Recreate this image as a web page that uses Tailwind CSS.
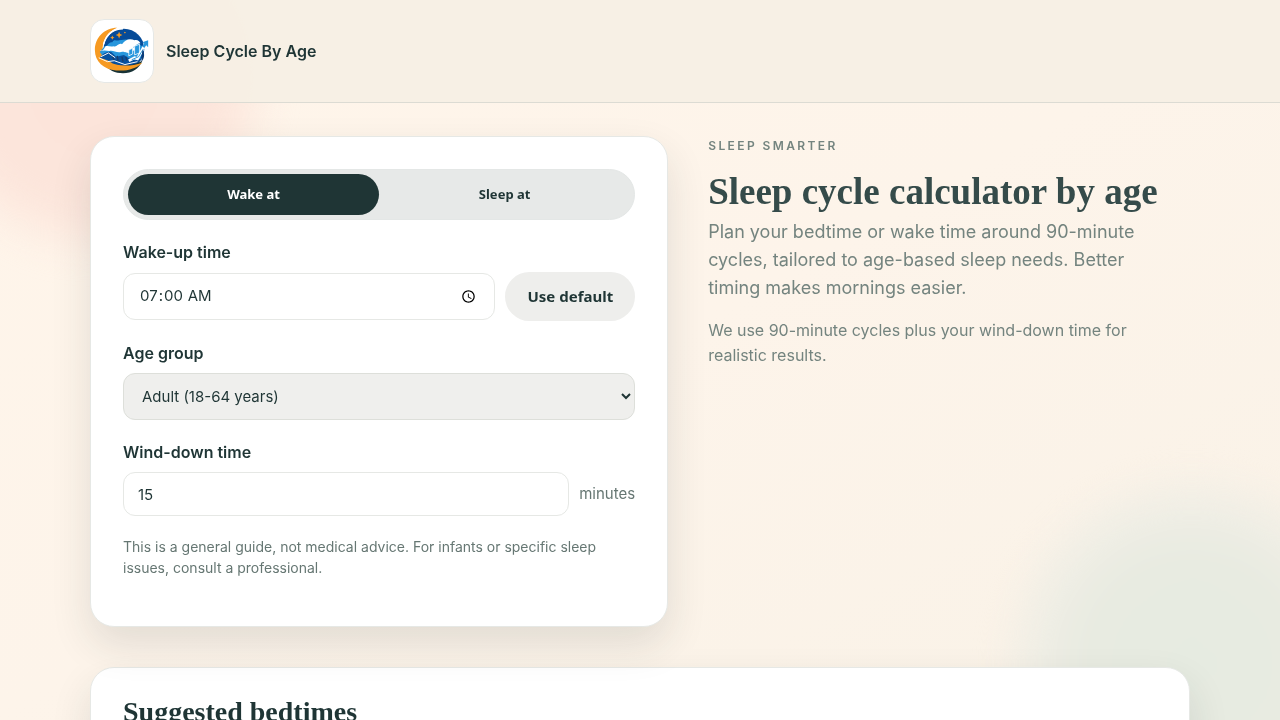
<!DOCTYPE html>
<html lang="en">
<head>
  <meta charset="UTF-8" />
  <meta content="width=device-width, initial-scale=1.0" name="viewport" />
  <title>Sleep Cycle By Age</title>
  <script src="https://cdn.jsdelivr.net/npm/@tailwindcss/browser@4"></script>
</head>
<body class="relative min-h-screen overflow-x-hidden bg-[#fdf4ea] font-['Inter','Noto_Sans',sans-serif] text-base text-[#1f3535]">
  <!-- soft background glows -->
  <div aria-hidden="true" class="fixed inset-0 -z-10 overflow-hidden bg-linear-to-br from-[#fff5ea] via-[#fdf4ea] to-[#f9f2e7]">
    <div class="absolute -left-24 -top-28 size-[380px] rounded-full bg-[radial-gradient(circle,#fce4da_0%,#fce5db_48%,transparent_70%)] blur-md"></div>
    <div class="absolute -bottom-36 -right-28 size-[400px] rounded-full bg-[radial-gradient(circle,#e6ebe1_0%,#e8ebe1_38%,#f0eee5_56%,transparent_70%)] blur-md"></div>
  </div>

  <header class="border-b border-[#dcdbd3] bg-[#f6efe4]/90">
    <div class="mx-auto flex max-w-[1100px] items-center py-[19px]">
      <a class="flex items-center gap-3 font-semibold" href="/">
        <svg class="size-16 rounded-[14px] border border-[#e6e8e6] bg-white" viewBox="0 0 64 64" aria-hidden="true">
          <!-- night sky and crescent -->
          <circle cx="34" cy="30" r="21" fill="#064b98" />
          <path d="M13 45c5 7 12 10 20 10 9 0 17-5 20-13-10 6-26 7-40 3z" fill="#173236" />
          <path d="M27 8C14 8 4 18 4 31c0 12 9 20 22 21 11 1 21-2 27-8-9 3-19 4-27 2C16 43 12 36 12 28c1-9 6-16 15-20z" fill="#f69a22" />
          <path d="M33 9c-10 0-17 5-20 16" fill="none" stroke="#fff" stroke-width="1.500" />
          <!-- clouds -->
          <path d="M14 27c4 0 4-5 8-4 2-4 4-1 7-2l7-1 9 1 9 7-3 12-16 5-20-4-6-8z" fill="#2796dc" />
          <path d="M9 31c3 2 5-2 6-4 3-1 5 1 8 0 4 2 5-4 9-2 4-6 9-6 13-4 3-1 5 1 6 3-4 0-4 3-8 4l6 1c-3 3-6 2-9 5-5 0-5-2-9-1-5 1-8-2-12-1l-10-1z" fill="#fff" />
          <!-- sleeper -->
          <path d="M9 39c3-5 8-7 12-6l5 5 8-2 6 4 7 1-6 4-13 1-9-4z" fill="#08519e" />
          <path d="M22 37l2 5m3-5l1 6m4-5l1 5m3-5l1 4" fill="none" stroke="#173e6d" stroke-width="1.500" />
          <path d="M8 39l9 4 7-1 11 4 13-3m-38-5l8-4 7 5" fill="none" stroke="#fff" stroke-width="1" />
          <!-- chart bars and arrow -->
          <path d="M39 31l4-2v6l-4 2zm6-4l5-2v9l-5 2z" fill="#2796dc" stroke="#fff" stroke-width=".8" />
          <path d="M39 42l6-3 3 1 8-15" fill="none" stroke="#fff" stroke-width="3" />
          <path d="M53 23l6-2v7l-2-2-2 3-2-2 2-3z" fill="#2796dc" />
          <path d="M42 41l7-3 5-8" fill="none" stroke="#2796dc" stroke-width="1" />
          <path d="M53 31c3 4 2 9-1 12z" fill="#0a3b75" />
          <path d="M29 12l1 2.500 2.500 1-2.500 1-1 2.500-1-2.500-2.500-1 2.500-1zm-7 4l.7 1.500 1.500.7-1.500.7L22 20.500l-.7-1.600-1.500-.7 1.500-.7zm13-4l1 1-1 1-1-1z" fill="#f69a22" />
        </svg>
        <span>Sleep Cycle By Age</span>
      </a>
    </div>
  </header>

  <main class="mx-auto max-w-[1100px] pb-10 pt-[33px]">
    <div class="grid grid-cols-[6fr_5fr] gap-10">
      <form class="rounded-3xl border border-[#e6e8e5] bg-white px-8 pb-12 pt-8 shadow-[0_18px_40px_rgba(31,53,53,0.12)]">
        <div class="grid grid-cols-2 rounded-full border border-[#e4e7e6] bg-[#e7e9e8] p-1 font-['Noto_Sans',sans-serif] text-[13px] font-bold">
          <button class="h-[41px] rounded-full bg-[#1f3535] text-white" type="button">Wake at</button>
          <button class="h-[41px] rounded-full" type="button">Sleep at</button>
        </div>

        <label class="mt-5 block font-semibold" for="wakeTime">Wake-up time</label>
        <div class="mt-2 flex items-center gap-2.5">
          <input class="h-[47px] min-w-0 flex-1 rounded-xl border border-[#e6e8e5] bg-white px-[15px] text-[15px]" id="wakeTime" type="time" value="07:00" />
          <button class="h-[49px] rounded-full bg-[#eeeeec] px-[22px] font-['Noto_Sans',sans-serif] text-[15px] font-bold" type="button">Use default</button>
        </div>

        <label class="mt-5 block font-semibold" for="ageGroup">Age group</label>
        <select class="mt-2 h-[47px] w-full rounded-xl border border-[#dddfda] bg-[#efefed] px-3.5 text-[15px]" id="ageGroup">
          <option>Adult (18-64 years)</option>
        </select>

        <label class="mt-5 block font-semibold" for="windDown">Wind-down time</label>
        <div class="mt-2 flex items-center gap-2.5">
          <input class="h-11 min-w-0 flex-1 rounded-xl border border-[#e6e8e5] bg-white px-3.5 text-[15px]" id="windDown" type="number" value="15" />
          <span class="text-[15px] text-[#667773]">minutes</span>
        </div>

        <p class="mt-5 text-sm leading-[21px] text-[#667773]">This is a general guide, not medical advice. For infants or specific sleep issues, consult a professional.</p>
      </form>

      <section>
        <p class="text-xs font-semibold uppercase leading-5 tracking-[0.2em] text-[#74847f]">Sleep smarter</p>
        <h1 class="mt-4 whitespace-nowrap font-['Liberation_Serif',serif] text-[37px] font-bold leading-10 text-[#354b4a]">Sleep cycle calculator by age</h1>
        <div class="max-w-[460px] text-[#74847f]">
          <p class="mt-1.5 text-lg leading-7">Plan your bedtime or wake time around 90-minute cycles, tailored to age-based sleep needs. Better timing makes mornings easier.</p>
          <p class="mt-4 leading-[25px]">We use 90-minute cycles plus your wind-down time for realistic results.</p>
        </div>
      </section>
    </div>

    <section class="mt-10 rounded-3xl border border-[#e6e8e5] bg-white px-8 pb-12 pt-7 shadow-[0_18px_40px_rgba(31,53,53,0.12)]">
      <h2 class="font-['Liberation_Serif',serif] text-[28px] font-bold leading-8">Suggested bedtimes</h2>
    </section>
  </main>
</body>
</html>
